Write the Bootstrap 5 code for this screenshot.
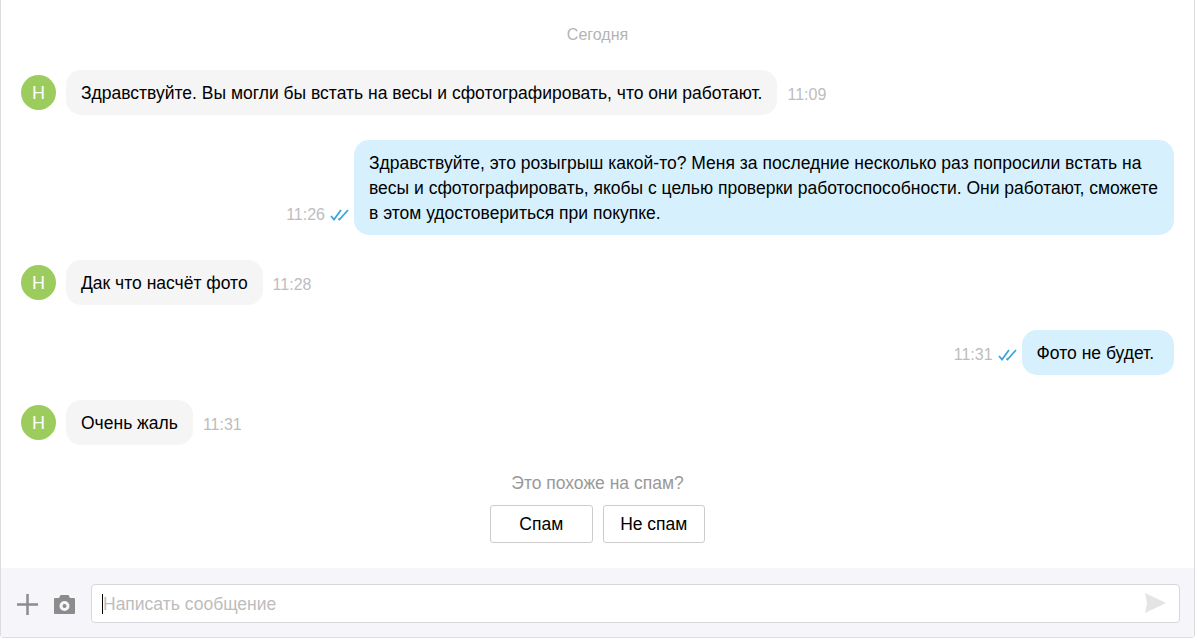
<!DOCTYPE html>
<html lang="ru">
<head>
  <meta charset="UTF-8">
  <title>Чат</title>
  <link href="https://cdn.jsdelivr.net/npm/bootstrap@5.3.0/dist/css/bootstrap.min.css" rel="stylesheet">
  <style>
    body {
      background: #fff;
      font-family: "Liberation Sans", Arial, sans-serif;
      color: #000;
      overflow: hidden;
    }
    .chat-window {
      width: 1195px;
      height: 638px;
      border: 1px solid #dcdce0;
      border-top: 0;
      border-radius: 0 0 4px 4px;
    }
    .chat-log {
      height: 568px;
      padding: 26px 20px 0 20px;
    }
    .day-label {
      font-size: 16px;
      line-height: 18px;
      color: #b4b4b4;
      margin-bottom: 26px;
    }
    .chat-row {
      margin-bottom: 25px;
    }
    .avatar-dot {
      width: 35px;
      height: 35px;
      padding-top: 1px;
      background: #9ccc5e;
      color: #fff;
      font-size: 18px;
      margin-right: 10px;
      margin-bottom: 5px;
    }
    .bubble {
      font-size: 17.5px;
      line-height: 25px;
      padding: 11px 15px 9px;
      border-radius: 15px;
    }
    .bubble-in {
      background: #f5f5f5;
    }
    .bubble-out {
      background: #d6f1fd;
      padding-right: 16px;
    }
    .bubble-short {
      padding-right: 20px;
    }
    .msg-time {
      font-size: 16px;
      line-height: 18px;
      color: #bdbdbd;
      margin-bottom: 11px;
    }
    .time-in {
      margin-left: 10px;
    }
    .time-out {
      margin-right: 5px;
    }
    .time-out svg {
      margin-left: 5px;
    }
    .spam-ask {
      font-size: 17.5px;
      line-height: 20px;
      color: #999;
      padding-top: 3px;
      margin-bottom: 12px;
    }
    .spam-btn {
      width: 102.5px;
      height: 38px;
      font-size: 17.5px;
      line-height: 36px;
      padding: 0;
      border: 1px solid #ccc;
      border-radius: 3px;
      background: #fff;
      color: #000;
    }
    .spam-actions {
      gap: 10px;
    }
    .composer {
      height: 69px;
      background: #f5f5fa;
      padding: 15px 14px 14px 16px;
    }
    .composer-icon {
      margin-top: 2px;
    }
    .camera-icon {
      margin-left: 16px;
      margin-right: 16px;
    }
    .composer-input {
      height: 39px;
      border: 1px solid #d8d8dc;
      border-radius: 4px;
      padding: 2px 13px 0 10px;
      font-size: 17.5px;
      color: #bdbdbd;
    }
    .caret-line {
      width: 1px;
      height: 20px;
      background: #000;
    }
    .send-icon {
      margin-bottom: 3px;
    }
  </style>
</head>
<body>

<div class="chat-window d-flex flex-column">
  <div class="chat-log">
    <div class="day-label text-center">Сегодня</div>

    <div class="chat-row d-flex align-items-end">
      <div class="avatar-dot rounded-circle d-flex align-items-center justify-content-center flex-shrink-0">Н</div>
      <div class="bubble bubble-in">Здравствуйте. Вы могли бы встать на весы и сфотографировать, что они работают.</div>
      <div class="msg-time time-in">11:09</div>
    </div>

    <div class="chat-row d-flex align-items-end justify-content-end">
      <div class="msg-time time-out d-flex align-items-center">11:26
        <svg width="19" height="12" viewBox="0 0 19 12" fill="none" stroke="#3aa6d8" stroke-width="1.8"><path d="M1 7l3 3.500 7-9.500M8.500 9.500l1 1 8.500-9.500"/></svg>
      </div>
      <div class="bubble bubble-out">Здравствуйте, это розыгрыш какой-то? Меня за последние несколько раз попросили встать на<br>весы и сфотографировать, якобы с целью проверки работоспособности. Они работают, сможете<br>в этом удостовериться при покупке.</div>
    </div>

    <div class="chat-row d-flex align-items-end">
      <div class="avatar-dot rounded-circle d-flex align-items-center justify-content-center flex-shrink-0">Н</div>
      <div class="bubble bubble-in">Дак что насчёт фото</div>
      <div class="msg-time time-in">11:28</div>
    </div>

    <div class="chat-row d-flex align-items-end justify-content-end">
      <div class="msg-time time-out d-flex align-items-center">11:31
        <svg width="19" height="12" viewBox="0 0 19 12" fill="none" stroke="#3aa6d8" stroke-width="1.8"><path d="M1 7l3 3.500 7-9.500M8.500 9.500l1 1 8.500-9.500"/></svg>
      </div>
      <div class="bubble bubble-out bubble-short">Фото не будет.</div>
    </div>

    <div class="chat-row d-flex align-items-end">
      <div class="avatar-dot rounded-circle d-flex align-items-center justify-content-center flex-shrink-0">Н</div>
      <div class="bubble bubble-in">Очень жаль</div>
      <div class="msg-time time-in">11:31</div>
    </div>

    <div class="spam-ask text-center">Это похоже на спам?</div>
    <div class="spam-actions d-flex justify-content-center">
      <button type="button" class="btn spam-btn">Спам</button>
      <button type="button" class="btn spam-btn">Не спам</button>
    </div>
  </div>

  <div class="composer d-flex align-items-center">
    <svg width="21" height="21" viewBox="0 0 21 21" fill="#8c8c8c" class="composer-icon flex-shrink-0"><path d="M9.250 0h2.500v9.250H21v2.500h-9.250V21h-2.500v-9.250H0v-2.500h9.250z"/></svg>
    <svg width="21" height="19" viewBox="0 0 21 19" fill="#8c8c8c" class="composer-icon camera-icon flex-shrink-0"><path fill-rule="evenodd" d="M6.500 0h8l1.500 3h4a1 1 0 0 1 1 1v14a1 1 0 0 1-1 1H1a1 1 0 0 1-1-1V4a1 1 0 0 1 1-1h4zM10.500 6a5 5 0 1 0 0 10 5 5 0 0 0 0-10zm0 3a2 2 0 1 1 0 4 2 2 0 0 1 0-4z"/></svg>
    <div class="composer-input bg-white flex-grow-1 d-flex align-items-center">
      <span class="caret-line"></span><span class="flex-grow-1">Написать сообщение</span>
      <svg class="send-icon" width="21" height="20" viewBox="0 0 21 20" fill="#e4e4e4"><path d="M0 0l21 10L0 20l2-10z"/></svg>
    </div>
  </div>
</div>

</body>
</html>
